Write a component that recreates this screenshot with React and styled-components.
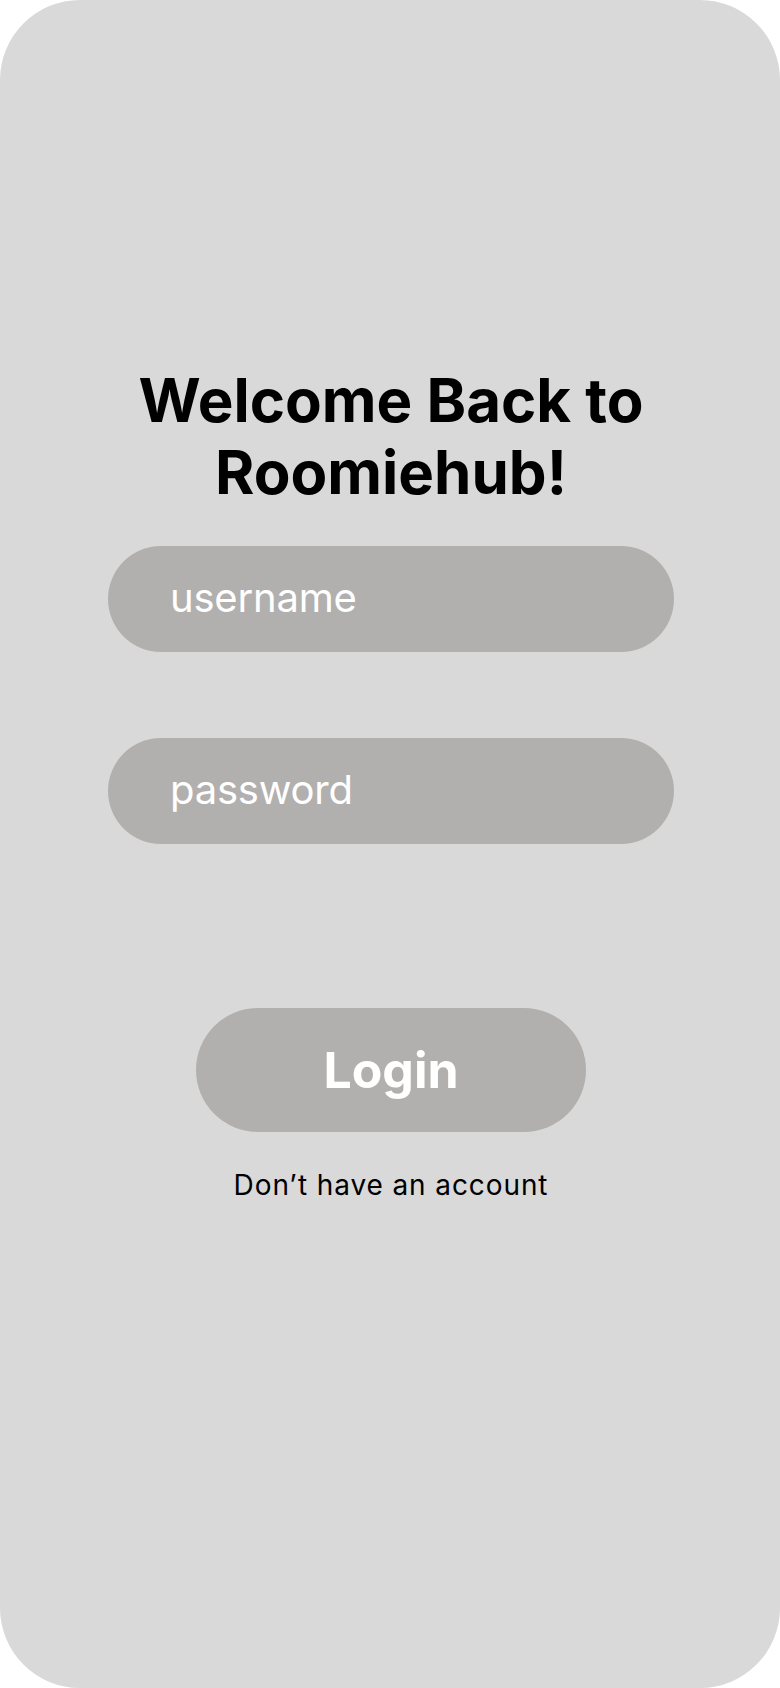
import React from 'react'
import styled, { createGlobalStyle } from 'styled-components'

const GlobalStyle = createGlobalStyle`
  html, body {
    margin: 0;
    padding: 0;
    background: #ffffff;
  }
  * {
    box-sizing: border-box;
  }
`

const Screen = styled.div`
  width: 780px;
  height: 1688px;
  background: #d9d9d9;
  border-radius: 80px;
  overflow: hidden;

  display: flex;
  flex-direction: column;
  align-items: center;
  padding: 364px 0 0 2px;

  font-family: Inter, 'Noto Sans', sans-serif;
`

const Title = styled.h1`
  margin: 0;
  font-size: 60px;
  line-height: 72px;
  font-weight: 700;
  color: #000;
  text-align: center;
  letter-spacing: 0;
`

const Form = styled.form`
  display: flex;
  flex-direction: column;
  align-items: center;
  margin-top: 38px;
  gap: 86px;
`

const Field = styled.input`
  width: 566px;
  height: 106px;
  border: none;
  outline: none;
  border-radius: 53px;
  background: #b1b0ae;
  padding: 0 0 4px 62px;

  font-family: Inter, 'Noto Sans', sans-serif;
  font-size: 40px;
  letter-spacing: -0.2px;
  color: #fff;

  &::placeholder {
    color: #fff;
    opacity: 1;
  }
`

const LoginButton = styled.button`
  width: 390px;
  height: 124px;
  margin-top: 164px;
  border: none;
  border-radius: 62px;
  background: #b1b0ae;
  cursor: pointer;

  font-family: Inter, 'Noto Sans', sans-serif;
  font-size: 50px;
  font-weight: 700;
  color: #fff;
`

const SignupLink = styled.a`
  margin-top: 36px;
  font-size: 28px;
  line-height: 34px;
  letter-spacing: 0.9px;
  color: #000;
  text-decoration: none;
`

export default function App() {
  return (
    <>
      <GlobalStyle />
      <Screen>
        <Title>
          Welcome Back to
          <br />
          Roomiehub!
        </Title>

        <Form onSubmit={(e) => e.preventDefault()}>
          <Field type="text" placeholder="username" />
          <Field type="password" placeholder="password" />
        </Form>

        <LoginButton type="button">Login</LoginButton>
        <SignupLink href="#">Don’t have an account</SignupLink>
      </Screen>
    </>
  )
}
